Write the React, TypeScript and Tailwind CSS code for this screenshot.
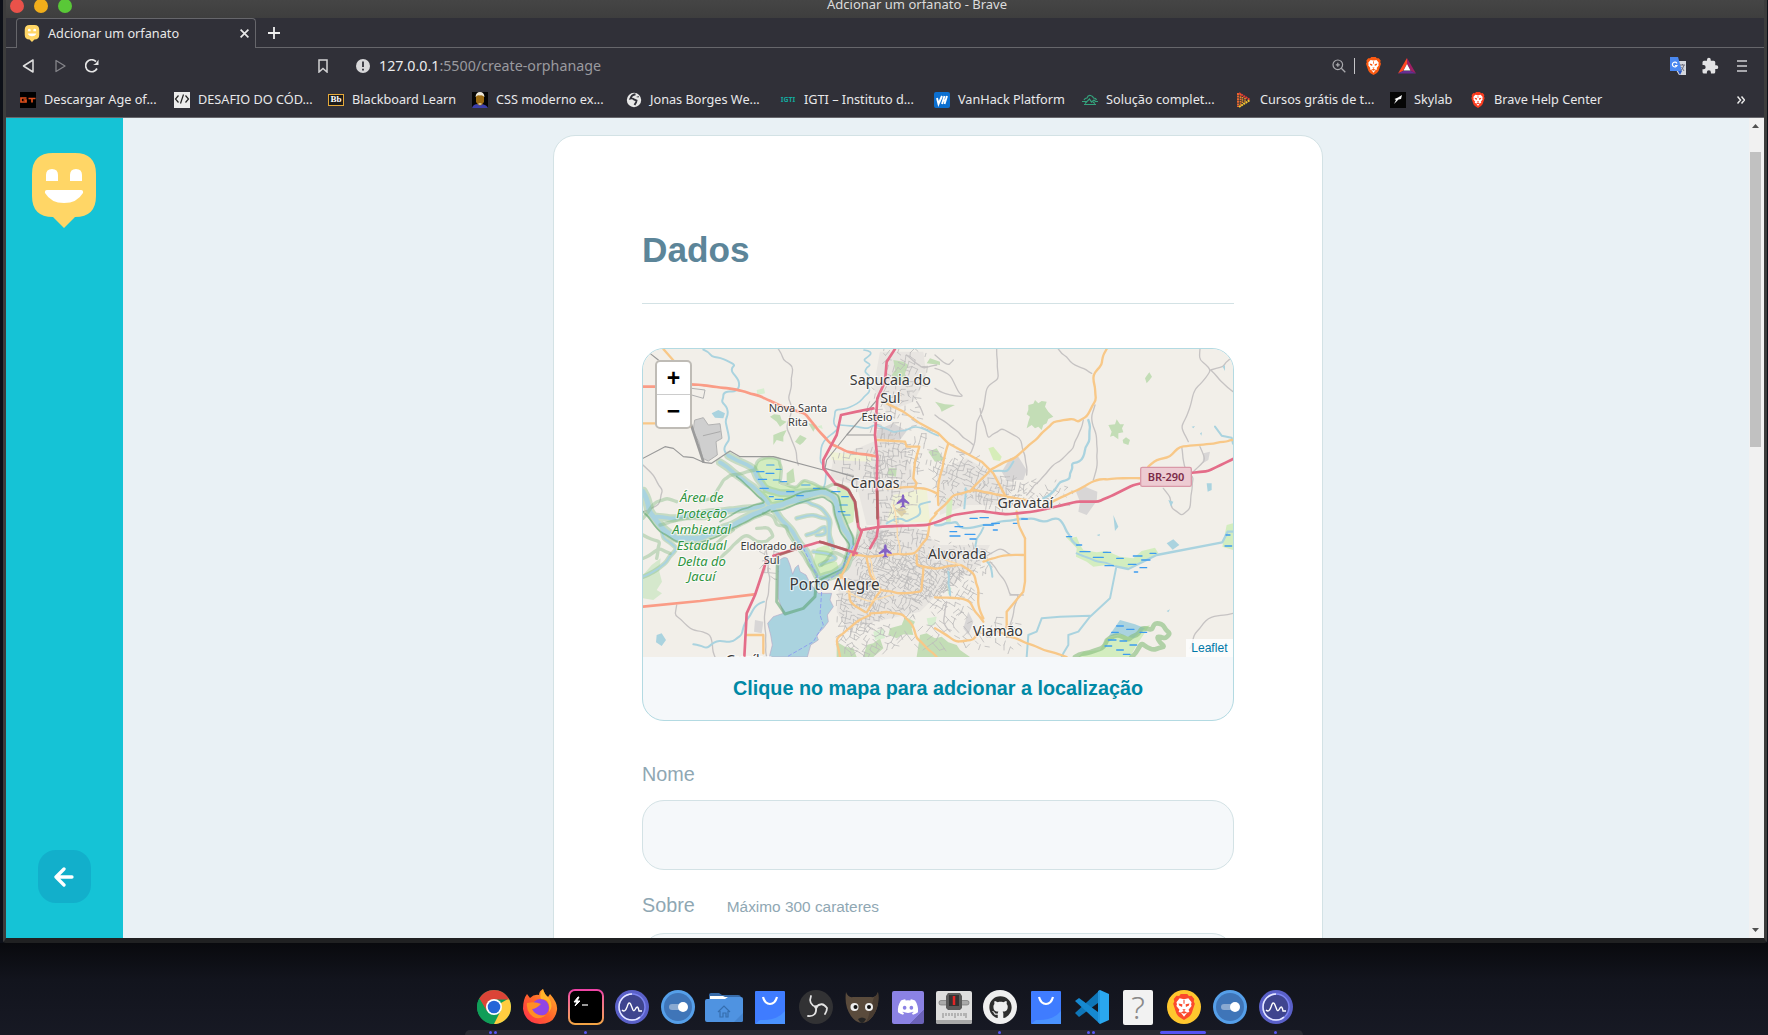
import React from "react";
import { FaDiscord, FaGithub } from "react-icons/fa";

const ui = "font-['Noto_Sans',sans-serif]";
const arial = "font-['Liberation_Sans',Arial,sans-serif]";

/* ---------- small brand icons ---------- */

function HappyLogo({ className }: { className: string }) {
  return (
    <svg viewBox="0 0 64 75" className={className}>
      <path d="M21 0H43Q64 0 64 21V43Q64 64 43 64L32 75L21 64Q0 64 0 43V21Q0 0 21 0Z" fill="#ffd666" />
      <path d="M14 28V22Q14 16 20 16Q26 16 26 22V28ZM38 28V22Q38 16 44 16Q50 16 50 22V28Z" fill="#fff" />
      <path d="M15 37H49Q51.500 37 51 40Q45 50 32 50Q19 50 13 40Q12.500 37 15 37Z" fill="#fff" />
    </svg>
  );
}

function BraveMark({ className, color }: { className: string; color: string }) {
  return (
    <svg viewBox="0 0 20 24" className={className}>
      <path d="M5.500 1.800L7 0H13L14.500 1.800L17 1.500L19.500 4.500L19 7L20 9L17 18Q16 20 14 21.500L10 24L6 21.500Q4 20 3 18L0 9L1 7L.500 4.500L3 1.500Z" fill={color} />
      <path d="M6 4L10 4.800L14 4L17 7.500L16.500 9.500L17 11L14.200 14.500L15 16.500L13 17L10 21L7 17L5 16.500L5.800 14.500L3 11L3.500 9.500L3 7.500Z" fill="#fff" />
      <path d="M5 8.800L8.500 9.500L8.200 12L5.500 10.500ZM15 8.800L11.500 9.500L11.800 12L14.500 10.500ZM8.500 14H11.500L10 16ZM7 17L10 15.800L13 17L10 18.200ZM9.500 5.500H10.500V9H9.500Z" fill={color} />
    </svg>
  );
}

const bookmarks: { label: string; width: string; icon: React.ReactNode }[] = [
  {
    label: "Descargar Age of...",
    width: "w-[154px]",
    icon: (
      <svg viewBox="0 0 16 16" className="size-4">
        <rect width="16" height="16" fill="#000" />
        <path d="M6.500 6H1V10H6V8H3.500M8.500 6.500H15.500M12 6.500V10.500" stroke="#e2501c" strokeWidth="1.700" fill="none" />
      </svg>
    ),
  },
  {
    label: "DESAFIO DO CÓD...",
    width: "w-[154px]",
    icon: (
      <svg viewBox="0 0 16 16" className="size-4">
        <rect width="16" height="16" fill="#ececec" />
        <path d="M4.500 3.500L1.500 7L4.500 10.500M11.500 3.500L14.500 7L11.500 10.500M9.500 2.500L6.500 11.500" stroke="#222" strokeWidth="1.200" fill="none" />
      </svg>
    ),
  },
  {
    label: "Blackboard Learn",
    width: "w-[144px]",
    icon: (
      <span className="flex h-3 w-4 items-center justify-center border border-[#e5a93a] bg-[#1b1b1b] font-['Liberation_Serif',serif] text-[9px] leading-none font-bold text-white">
        Bb
      </span>
    ),
  },
  {
    label: "CSS moderno ex...",
    width: "w-[154px]",
    icon: (
      <svg viewBox="0 0 16 16" className="size-4">
        <rect width="16" height="16" fill="#050505" />
        <path d="M0 16Q1 12 6 12L10 12Q15 13 16 16Z" fill="#3c3fa8" />
        <path d="M4 4Q8 -1 12 4V10Q8 17 4 10Z" fill="#9a6a12" />
        <path d="M3.500 5Q4 0 8 0Q12 0 12.500 5Q10 2.500 8 3.500Q5.500 2.500 3.500 5Z" fill="#efe9da" />
        <path d="M6.500 11H9.500V12.500Q8 13.500 6.500 12.500Z" fill="#c9b890" />
      </svg>
    ),
  },
  {
    label: "Jonas Borges We...",
    width: "w-[154px]",
    icon: (
      <svg viewBox="0 0 16 16" className="size-4">
        <circle cx="8" cy="8" r="7.200" fill="#e8e8e8" />
        <path d="M9.500 2.200Q6 3 5.500 4.500L4.500 6.500Q7 6 8 7.500L10.500 8.500L10 10.500L8.500 13" fill="none" stroke="#303038" strokeWidth="1.900" />
        <path d="M10 5L12.500 5.500L13 4Z" fill="#303038" />
      </svg>
    ),
  },
  {
    label: "IGTI – Instituto d...",
    width: "w-[154px]",
    icon: <span className="flex h-4 w-4 items-center justify-center text-[7px] leading-none font-bold text-[#13a89e]">IGTI</span>,
  },
  {
    label: "VanHack Platform",
    width: "w-[148px]",
    icon: (
      <svg viewBox="0 0 16 16" className="size-4">
        <rect width="16" height="16" rx="2" fill="#0b6fd0" />
        <path d="M3 6L4.500 12L8 4M8 12L10.500 4M9 8.500H12M10.500 12L13 4" stroke="#fff" strokeWidth="1.900" fill="none" />
      </svg>
    ),
  },
  {
    label: "Solução complet...",
    width: "w-[154px]",
    icon: (
      <svg viewBox="0 0 16 16" className="size-4">
        <path d="M2 12.500H14M0 9.500H5L7.500 7L9.500 10L12 8L13.500 9.500H16M2 8Q3 6 5 6Q6 3 8.500 3.500Q11 4 11.500 6Q14 6 14.500 8M3 11.500L5 9.500M13 11.500L11 10" stroke="#34a27c" strokeWidth="1.200" fill="none" />
      </svg>
    ),
  },
  {
    label: "Cursos grátis de t...",
    width: "w-[154px]",
    icon: (
      <svg viewBox="0 0 16 16" className="size-4">
        <path d="M2 1V15" stroke="#e7672f" strokeWidth="2" strokeDasharray="2 .6" />
        <path d="M4.500 2V14" stroke="#ee7b2d" strokeWidth="1.800" strokeDasharray="1.6 .7" />
        <path d="M3 1L14 8" stroke="#e43c32" strokeWidth="2" strokeDasharray="2 .6" />
        <path d="M3 15L14 8" stroke="#f4c430" strokeWidth="2" strokeDasharray="2 .6" />
        <path d="M6.500 5V11M9 6V10" stroke="#f0932b" strokeWidth="1.600" strokeDasharray="1.5 .7" />
      </svg>
    ),
  },
  {
    label: "Skylab",
    width: "w-[80px]",
    icon: (
      <svg viewBox="0 0 16 16" className="size-4">
        <rect width="16" height="16" fill="#060606" />
        <path d="M4 12L6 8L4.500 7L8 5.500L12 3L11 7L8.500 7.500L6 10Z" fill="#fff" />
      </svg>
    ),
  },
  { label: "Brave Help Center", width: "w-[160px]", icon: <BraveMark className="h-4 w-4" color="#fb3b1e" /> },
];

/* ---------- browser chrome ---------- */

function TitleBar() {
  return (
    <div className="relative flex h-[18px] shrink-0 items-start bg-linear-to-b from-[#454545] to-[#3e3e3e]">
      <div className="ml-1 flex gap-[10px]">
        <span className="-mt-px size-[14px] rounded-full bg-[#e9524a]" />
        <span className="-mt-px size-[14px] rounded-full bg-[#f1ae1b]" />
        <span className="-mt-px size-[14px] rounded-full bg-[#59c837]" />
      </div>
      <span className="absolute -top-[5px] left-[821px] text-[13px] leading-[18px] whitespace-nowrap text-[#dcdcdc]">
        Adcionar um orfanato - Brave
      </span>
    </div>
  );
}

function TabStrip() {
  return (
    <div className="flex h-[30px] shrink-0">
      <div className="w-[10px] border-b border-[#66666b]" />
      <div className="flex w-[240px] items-center rounded-t-[4px] border border-b-0 border-[#66666b] pl-[7px] text-[#e8e8e8]">
        <HappyLogo className="h-[17px] w-4" />
        <span className="ml-2 text-[12.7px]">Adcionar um orfanato</span>
        <svg viewBox="0 0 8 8" className="ml-auto mr-[6px] size-[9px]">
          <path d="M.500 .500L7.500 7.500M7.500 .500L.500 7.500" stroke="#e8e8e8" strokeWidth="1.500" />
        </svg>
      </div>
      <div className="flex flex-1 items-center border-b border-[#66666b] pl-3">
        <svg viewBox="0 0 12 12" className="size-3">
          <path d="M6 0V12M0 6H12" stroke="#f0f0f0" strokeWidth="1.800" />
        </svg>
      </div>
    </div>
  );
}

function NavBar() {
  return (
    <div className="flex h-9 shrink-0 items-center pb-px">
      <svg viewBox="0 0 12 14" className="ml-4 h-[14px] w-3">
        <path d="M11 1V13L1.500 7Z" fill="none" stroke="#e0e0e0" strokeWidth="1.500" strokeLinejoin="round" />
      </svg>
      <svg viewBox="0 0 12 14" className="ml-[21px] h-[14px] w-3">
        <path d="M1 1.500V12.500L10 7Z" fill="none" stroke="#85858a" strokeWidth="1.300" strokeLinejoin="round" />
      </svg>
      <svg viewBox="0 0 14 14" className="ml-[18px] size-[14px]">
        <path d="M12 9.500A6 6 0 1 1 11 2.600" fill="none" stroke="#e6e6e6" strokeWidth="1.700" />
        <path d="M13.500 .500V6H8Q11 5 13.500 .500Z" fill="#e6e6e6" />
      </svg>
      <svg viewBox="0 0 10 14" className="ml-[219px] h-[14px] w-[10px]">
        <path d="M1 1H9V13L5 9.500L1 13Z" fill="none" stroke="#d2d2d4" strokeWidth="1.500" />
      </svg>
      <svg viewBox="0 0 14 14" className="ml-7 size-[14px]">
        <circle cx="7" cy="7" r="7" fill="#d8d8da" />
        <path d="M7 2.500V8M7 9.800V11.500" stroke="#303038" strokeWidth="1.800" />
      </svg>
      <span className="ml-[9px] text-[14.25px] text-[#ececee]">
        127.0.0.1<span className="text-[#9a9a9f]">:5500/create-orphanage</span>
      </span>
      <div className="ml-auto flex items-center">
        <svg viewBox="0 0 14 14" className="size-[14px]">
          <circle cx="5.800" cy="5.800" r="4.800" fill="none" stroke="#a9a9ad" strokeWidth="1.200" />
          <path d="M9.300 9.300L13.300 13.300M5.800 3.800V7.800M3.800 5.800H7.800" stroke="#a9a9ad" strokeWidth="1.300" />
        </svg>
        <span className="ml-2 h-4 w-px bg-[#c5c5c8]" />
        <BraveMark className="ml-[10px] h-[18px] w-[17px]" color="#fb5a12" />
        <svg viewBox="0 0 18 16" className="ml-4 h-4 w-[18px]">
          <path d="M9 0L0 15.500L5 13L9 6Z" fill="#ff4724" />
          <path d="M9 0L18 15.500L13 13L9 6Z" fill="#9e1f63" />
          <path d="M0 15.500H18L13 13H5Z" fill="#662d91" />
          <path d="M9 6L5.500 12.500H12.500Z" fill="#fff" />
        </svg>
      </div>
      <div className="ml-[254px] mr-[17px] flex items-center">
        <svg viewBox="0 0 16 18" className="h-[18px] w-4">
          <path d="M6 4H16V18H9L6 13Z" fill="#d4d7dc" />
          <path d="M0 0H8L12 14H0Z" fill="#4a88f0" />
          <path d="M8 14H12L10 18Z" fill="#2a56c6" />
          <path d="M7 6.500A2.400 2.400 0 1 0 7 8.500H5" fill="none" stroke="#fff" strokeWidth="1.200" />
          <path d="M10 8H15M12.500 7V8M14 8Q13 12 10.500 14M11.500 10L14 14" fill="none" stroke="#667" strokeWidth=".9" />
        </svg>
        <svg viewBox="0 0 24 24" className="ml-[15px] size-[18px]">
          <path d="M20.500 11H19V7a2 2 0 0 0-2-2h-4V3.500a2.500 2.500 0 0 0-5 0V5H4a2 2 0 0 0-2 2v3.800h1.500a2.700 2.700 0 0 1 0 5.400H2V20a2 2 0 0 0 2 2h3.800v-1.500a2.700 2.700 0 0 1 5.400 0V22H17a2 2 0 0 0 2-2v-4h1.500a2.500 2.500 0 0 0 0-5Z" fill="#e2e2e4" />
        </svg>
        <svg viewBox="0 0 10 14" className="ml-[18px] h-[14px] w-[10px]">
          <path d="M0 2H10M0 7H10M0 12H10" stroke="#d0d0d3" strokeWidth="1.700" />
        </svg>
      </div>
    </div>
  );
}

function BookmarksBar() {
  return (
    <div className="flex h-[34px] shrink-0 items-center border-b border-[#67676c] pb-px pl-[14px]">
      {bookmarks.map((b) => (
        <div key={b.label} className={`flex shrink-0 items-center gap-2 ${b.width}`}>
          {b.icon}
          <span className="text-[12.7px] whitespace-nowrap text-[#e8e8ea]">{b.label}</span>
        </div>
      ))}
      <svg viewBox="0 0 8 8" className="ml-auto mr-[19px] size-2">
        <path d="M.500 .500L3.500 4L.500 7.500M4.500 .500L7.500 4L4.500 7.500" fill="none" stroke="#ececec" strokeWidth="1.500" />
      </svg>
    </div>
  );
}

/* ---------- map ---------- */

type District = { x: number; y: number; rx: number; ry: number; step: number; tilt: number; density: number };

const districts: District[] = [
  { x: 790, y: 60, rx: 75, ry: 90, step: 14, tilt: 0.3, density: 0.35 },
  { x: 750, y: 200, rx: 90, ry: 80, step: 14, tilt: 0.2, density: 0.35 },
  { x: 660, y: 360, rx: 95, ry: 60, step: 16, tilt: 0.1, density: 0.45 },
  { x: 755, y: 400, rx: 80, ry: 140, step: 13, tilt: 0.05, density: 0.5 },
  { x: 850, y: 310, rx: 80, ry: 60, step: 15, tilt: 0.2, density: 0.3 },
  { x: 960, y: 400, rx: 90, ry: 75, step: 12, tilt: 0.4, density: 0.5 },
  { x: 1075, y: 440, rx: 95, ry: 50, step: 12, tilt: 0.2, density: 0.5 },
  { x: 1200, y: 445, rx: 100, ry: 45, step: 13, tilt: 0.7, density: 0.3 },
  { x: 700, y: 610, rx: 60, ry: 65, step: 12, tilt: 0.5, density: 0.6 },
  { x: 650, y: 780, rx: 65, ry: 95, step: 12, tilt: 0.2, density: 0.6 },
  { x: 755, y: 720, rx: 125, ry: 90, step: 12, tilt: 0.5, density: 0.6 },
  { x: 790, y: 590, rx: 95, ry: 55, step: 13, tilt: 0.1, density: 0.5 },
  { x: 850, y: 690, rx: 110, ry: 70, step: 12, tilt: 0.7, density: 0.5 },
  { x: 960, y: 640, rx: 100, ry: 50, step: 12, tilt: 0.1, density: 0.55 },
  { x: 930, y: 730, rx: 80, ry: 80, step: 13, tilt: 0.6, density: 0.4 },
  { x: 690, y: 880, rx: 90, ry: 55, step: 14, tilt: 0.6, density: 0.45 },
  { x: 910, y: 860, rx: 140, ry: 60, step: 17, tilt: 0.8, density: 0.28 },
  { x: 1075, y: 865, rx: 75, ry: 50, step: 15, tilt: 0.3, density: 0.3 },
  { x: 390, y: 640, rx: 32, ry: 60, step: 11, tilt: 0.2, density: 0.4 },
];

function randomizer(start: number) {
  let seed = start;
  return () => {
    seed = (seed * 16807) % 2147483647;
    return seed / 2147483647;
  };
}

// Repeatable pseudo-random street grids, one per urban district.
function streets(): string {
  const rand = randomizer(71);
  let d = "";
  for (const p of districts) {
    const n = Math.ceil(Math.max(p.rx, p.ry) / p.step);
    const c = Math.cos(p.tilt);
    const s = Math.sin(p.tilt);
    const grid: { x: number; y: number; inside: boolean }[][] = [];
    for (let i = -n; i <= n; i++) {
      const row: { x: number; y: number; inside: boolean }[] = [];
      for (let j = -n; j <= n; j++) {
        const u = i * p.step + (rand() - 0.5) * 9;
        const v = j * p.step + (rand() - 0.5) * 9;
        const dx = u * c - v * s;
        const dy = u * s + v * c;
        const r = (dx * dx) / (p.rx * p.rx) + (dy * dy) / (p.ry * p.ry);
        row.push({ x: p.x + dx, y: p.y + dy, inside: r < 0.6 + rand() * 0.7 });
      }
      grid.push(row);
    }
    for (let i = 0; i < 2 * n; i++) {
      for (let j = 0; j < 2 * n; j++) {
        const a = grid[i][j];
        if (!a.inside) continue;
        const r = grid[i + 1][j];
        const b = grid[i][j + 1];
        if (rand() < p.density) d += `M${a.x.toFixed(0)} ${a.y.toFixed(0)}L${r.x.toFixed(0)} ${r.y.toFixed(0)}`;
        if (rand() < p.density) d += `M${a.x.toFixed(0)} ${a.y.toFixed(0)}L${b.x.toFixed(0)} ${b.y.toFixed(0)}`;
      }
    }
  }
  return d;
}

// Turns "x y x y ..." point lists (separated by "/") into rounded, slightly meandering curves.
function curve(lists: string, amp: number): string {
  const rand = randomizer(1234);
  return lists
    .split("/")
    .map((list) => {
      const n = list.trim().split(/\s+/).map(Number);
      const pts: number[][] = [];
      for (let i = 0; i + 3 < n.length; i += 2) {
        const dx = n[i + 2] - n[i];
        const dy = n[i + 3] - n[i + 1];
        const len = Math.hypot(dx, dy) || 1;
        const parts = Math.max(2, Math.round(len / 18));
        for (let k = 0; k < parts; k++) {
          const off = k === 0 ? 0 : (rand() - 0.5) * 2 * amp;
          pts.push([n[i] + (dx * k) / parts - (dy / len) * off, n[i + 1] + (dy * k) / parts + (dx / len) * off]);
        }
      }
      pts.push([n[n.length - 2], n[n.length - 1]]);
      let d = `M${pts[0][0].toFixed(1)} ${pts[0][1].toFixed(1)}`;
      for (let i = 1; i < pts.length - 1; i++) {
        const mx = (pts[i][0] + pts[i + 1][0]) / 2;
        const my = (pts[i][1] + pts[i + 1][1]) / 2;
        d += `Q${pts[i][0].toFixed(1)} ${pts[i][1].toFixed(1)} ${mx.toFixed(1)} ${my.toFixed(1)}`;
      }
      const e = pts[pts.length - 1];
      return `${d}L${e[0]} ${e[1]}`;
    })
    .join("");
}

const streetPath = streets();

const mainRiver = curve(
  "9 440 22 470 28 500 55 535 85 565 110 580 170 582 220 565 290 535 340 508 385 490 430 478 490 455 540 440 570 448 588 470 592 500 605 540 625 570 637 600 625 640 615 665 580 690 545 700",
  2,
);
const sideRivers = curve(
  "240 352 290 390 340 425 385 475/265 332 300 350 340 370 352 400 375 430 420 445 490 442 540 440/400 490 420 520 450 550 475 590 500 620 515 660 530 690 548 720/50 515 110 520 160 510 220 500 280 495 340 490 370 480",
  2,
);
const creeks = curve(
  "420 480 500 468 545 490 572 530 568 570 580 610/470 520 510 510 565 520 570 600/500 570 530 560 555 545 558 565 530 570/520 620 560 625 590 640 540 660/60 540 70 580 110 610 80 650 40 680 9 695",
  3,
);

const labels: { t: string; x: number; y: number; s: number; green?: boolean }[] = [
  { t: "Sapucaia do", x: 751, y: 119, s: 42.8 },
  { t: "Sul", x: 751, y: 174, s: 42.8 },
  { t: "Nova Santa", x: 474, y: 202, s: 33 },
  { t: "Rita", x: 474, y: 243, s: 33 },
  { t: "Esteio", x: 711, y: 227, s: 33 },
  { t: "Canoas", x: 705, y: 428, s: 42.5 },
  { t: "Eldorado do", x: 395, y: 616, s: 33 },
  { t: "Sul", x: 395, y: 657, s: 33 },
  { t: "Porto Alegre", x: 584, y: 736, s: 46 },
  { t: "Guaíba", x: 327, y: 959, s: 42 },
  { t: "Gravataí", x: 1156, y: 490, s: 42.5 },
  { t: "Alvorada", x: 952, y: 641, s: 42.5 },
  { t: "Viamão", x: 1074, y: 873, s: 42.5 },
  { t: "Área de", x: 185, y: 472, s: 39, green: true },
  { t: "Proteção", x: 185, y: 520, s: 39, green: true },
  { t: "Ambiental", x: 185, y: 567, s: 39, green: true },
  { t: "Estadual", x: 185, y: 614, s: 39, green: true },
  { t: "Delta do", x: 185, y: 662, s: 39, green: true },
  { t: "Jacuí", x: 185, y: 709, s: 39, green: true },
];

const plane = "M0 -20Q4 -20 4 -8L19 5V10L4 4L3 13L8 18V20L0 18L-8 20V18L-3 13L-4 4L-19 10V5L-4 -8Q-4 -20 0 -20Z";

function RegionMap() {
  return (
    <svg viewBox="9 12 1770 924" className="block h-[308px] w-[590px] bg-[#f2efe9]" strokeLinejoin="round" strokeLinecap="round">
      {/* built-up land and parks */}
      <g fill="#e8e5e1">
        <path d="M720 20L850 20L860 100L820 170L740 200L700 130Z" />
        <path d="M700 290L790 290L830 420L790 540L680 540L650 420L570 400L580 340Z" />
        <path d="M890 380L980 340L1120 420L1090 480L980 480L900 510Z" />
        <path d="M650 560L820 540L900 600L1050 600L1020 660L900 740L840 800L620 850L590 800L600 700Z" />
      </g>
      <path d="M165 225L190 218L205 240L240 236L246 280L228 290L232 330L205 348L188 340L176 290L160 260Z" fill="#cfcfcf" stroke="#b2b2b2" strokeWidth="3" />
      <path d="M190 272L240 260" stroke="#aaa" strokeWidth="3" />
      <g fill="#d8d6d6">
        <path d="M1135 335L1160 375L1150 405L1100 405L1085 380L1110 340Z" />
        <path d="M1308 440L1335 425L1372 440L1370 468L1340 510L1315 500L1320 470Z" />
        <path d="M712 255L760 235L800 258L780 285L710 280Z" />
        <path d="M1690 325L1710 320L1705 345L1688 355ZM985 800L1000 830L985 870L970 850ZM345 825L370 830L365 865L342 860Z" />
        <path d="M680 560L730 555L725 600L690 610ZM890 610L930 620L920 640L890 630Z" />
      </g>
      <path d="M570 320L700 335L695 350L575 345ZM760 450L860 430L870 530L740 535Z" fill="#f0f2d6" />
      <path d="M765 495L785 485L800 500L785 515Z" fill="#ddd0a8" />
      <g fill="#c3ddb6">
        <path d="M760 45L790 50L805 60L795 85L800 110L780 108L770 120L755 90L765 75Z" />
        <path d="M440 385L460 370L465 410L440 420ZM390 215L402 208L420 210L425 225L440 230L420 245L410 230ZM400 270L420 262L440 255L430 275L430 290L410 285L400 300ZM480 270L500 280L490 292L480 300L465 290ZM505 235L530 240L520 260Z" />
        <path d="M745 370L770 370L768 395L742 390ZM865 320L890 310L912 345L885 350ZM870 40L900 50L900 60L860 55Z" />
        <path d="M1165 180L1180 176L1185 165L1195 175L1205 168L1220 170L1215 185L1225 200L1240 215L1225 222L1220 235L1210 240L1205 255L1195 245L1185 250L1175 240L1160 250L1165 230L1170 215L1160 208L1165 195Z" />
        <path d="M1405 240L1425 238L1430 223L1440 238L1452 238L1446 250L1450 262L1435 265L1435 283L1420 272L1410 275L1415 260ZM1448 285L1458 277L1470 285L1465 300L1450 295ZM1515 100L1520 92L1528 82L1536 95L1528 106L1520 115Z" />
        <path d="M750 850L785 840L795 815L825 830L815 850L820 870L790 868L770 880L745 870ZM680 900L700 895L720 880L730 910L700 936L670 936Z" />
        <path d="M840 870L860 865L885 880L905 875L925 892L950 900L960 915L990 936L830 936ZM590 890L615 905L640 910L650 936L590 936Z" />
        <path d="M885 170L915 178L945 180L925 190L905 200L900 188ZM885 320L905 330L890 350Z" />
      </g>
      <g fill="#d7eed0">
        <path d="M350 135L372 130L375 145L352 150ZM700 860L730 850L735 880L705 885ZM860 820L890 815L885 840L865 842ZM920 720L935 730L925 750ZM530 245L545 240L548 252Z" />
      </g>
      <path d="M9 690L35 660L62 640L58 680L66 710L50 735L66 745L40 765L9 760Z" fill="#d5e8cc" />
      <path d="M1045 310L1060 305L1085 335L1080 348L1060 345Z" fill="#d6edb9" />

      {/* minor streets */}
      <path d={streetPath} fill="none" stroke="#bdbbbb" strokeWidth="2.400" />
      <g fill="none" stroke="#c6c3c3" strokeWidth="4">
        <path
          d={curve(
            "415 12 430 45 458 65 455 120 445 160 455 190 440 250 470 325 475 360/9 360 40 390 68 435 55 480 9 500/110 780 105 810 150 850 210 870 225 936/375 600 390 700 375 800 380 936/1070 12 1075 100 1040 130 1030 190 1010 230 1005 290 990 330 950 320/1020 190 1045 280 1085 250 1140 280 1155 330 1160 390/1255 12 1290 50 1340 75 1355 85",
            3,
          )}
        />
        <path
          d={curve(
            "1330 225 1300 310 1230 370 1160 450/1365 180 1355 225 1370 280 1370 370 1360 405/1680 12 1680 45 1712 75 1660 145 1645 200 1625 245 1645 290/1712 75 1750 65 1779 30/1712 75 1779 140/1625 305 1635 370 1660 395 1650 490 1625 512 1595 490 1590 455 1570 430/1680 305 1695 345 1660 380/1779 805 1705 820 1665 865 1650 910",
            3,
          )}
        />
        <path
          d={curve(
            "885 70 930 90 950 130 970 155 930 150 885 130/885 210 940 250 1000 300/885 30 925 60 940 45/1030 640 1080 610 1110 630 1150 630/1050 650 1090 700 1110 750 1135 750 1110 840/1110 750 1150 750/800 30 850 70 890 60/830 170 850 210/920 770 910 830 930 860",
            3,
          )}
        />
      </g>

      {/* wetlands */}
      <g fill="#d3edbf">
        <path d="M340 375Q350 340 385 337Q425 338 424 365L418 420L470 425L490 405L560 430L490 470L430 478L380 475L350 440L290 395L370 440Q360 400 340 375Z" />
        <path d="M590 425L620 430L645 480L640 530L620 540L600 480Z" />
        <path d="M1275 573L1295 578L1310 575L1320 600L1330 615L1370 622L1400 618L1440 635L1480 640L1505 618L1545 608L1555 625L1510 650L1460 670L1400 660L1360 665L1340 650L1308 635L1310 610Z" />
        <path d="M1760 540L1779 535V615L1747 605Z" />
        <path d="M1315 936L1330 920L1380 915L1400 880L1440 870L1500 850L1530 840L1490 900L1470 936Z" />
        <path d="M920 460L938 465L932 530L918 530ZM530 610L560 600L580 620L560 650L590 650L600 680L540 700L520 650Z" />
      </g>
      <g fill="none" stroke="#7fbb86" opacity=".38">
        <path d={mainRiver} strokeWidth="30" />
        <path d={sideRivers} strokeWidth="24" />
        <path d={creeks} strokeWidth="14" />
      </g>

      {/* water */}
      <path
        d="M415 650Q430 632 442 640L450 660L458 688L466 668L475 660L480 680L498 690L510 715L535 745L575 745L570 765L580 785L562 810L565 830L550 850L530 870L535 885L512 900L502 936H388L397 900L392 870L383 835L400 815L430 805L415 760Z"
        fill="#aad3df"
        stroke="#b5a9c8"
        strokeWidth="2"
      />
      <g fill="none" stroke="#aad3df">
        <path d={mainRiver} strokeWidth="15" />
        <path d={sideRivers} strokeWidth="11" />
        <path d={creeks} strokeWidth="6" />
        <path
          d={curve("190 14 215 35 250 42 285 60 275 80 295 105 295 132 250 145 245 170 262 190 260 245 268 285 252 310 268 335", 5)}
          strokeWidth="6"
        />
        <path
          d={curve(
            "672 15 695 25 670 45 692 60 674 80 690 95 675 115 690 140 660 170 620 190 585 195 580 230 595 250 550 290 540 350 560 380 550 430/600 240 680 250 700 240 760 262 830 245 895 272",
            4,
          )}
          strokeWidth="5"
        />
        <path d={curve("160 898 200 910 230 888 280 888 305 870 320 825 350 780 372 770", 3)} strokeWidth="6" />
        <path
          d={curve(
            "1345 225 1348 290 1325 345 1295 355 1290 400 1260 410 1240 440 1210 460/885 540 950 530 970 550 1010 545 1050 540 1100 528 1180 520 1220 530 1255 520 1280 560 1310 600",
            5,
          )}
          strokeWidth="7"
        />
        <path d={curve("1030 548 1010 580 1005 605 1050 660 1057 695/1060 378 1100 380 1120 350/977 430 973 490/925 680 930 750/1310 625 1350 640 1430 665", 3)} strokeWidth="6" />
        <path d="M1785 560L1763 560L1747 592L1550 630L1465 672L1430 665" strokeWidth="7" />
        <path d="M1428 670L1410 760L1350 815L1315 860L1285 870L1285 900L1270 925L1265 936M1350 812L1260 815L1205 820L1190 860L1165 870L1160 936M1725 245L1745 272L1775 278L1779 296" strokeWidth="6" />
        <path d={curve("740 535 780 520 800 530 840 510 835 480 870 470", 4)} strokeWidth="6" />
      </g>
      <path
        d="M50 870L65 865L78 885L65 903L48 892ZM215 205L235 195L255 205L250 220L225 218ZM1580 595L1600 583L1618 600L1598 614ZM1420 510L1435 545L1425 558ZM1700 415L1715 415L1715 435L1703 440ZM1748 65L1755 60L1755 78ZM1655 245L1665 243L1660 250ZM1585 465L1600 470L1593 485ZM1680 265L1686 262L1684 272ZM1370 570L1380 567L1378 574ZM1580 798L1590 793L1585 802Z"
        fill="#aad3df"
      />
      <path d="M1440 825L1485 838L1515 850L1480 880L1440 868L1405 875Z" fill="#aad3df" />
      <path
        d={curve("1305 936 1350 922 1385 910 1400 885 1430 870 1465 885 1490 870 1505 850 1535 855 1545 835 1570 840 1590 865 1575 880 1550 875 1575 905 1540 915 1505 895 1495 910 1475 936", 4)}
        fill="none"
        stroke="#85bd7c"
        strokeWidth="14"
        opacity=".6"
      />
      <path d="M350 380H372M380 360H402M378 385H402M408 373H424M355 403H380M400 405H420M360 430H385M388 455H400M405 463H428M440 440H462M470 452H490M485 420H510M520 430H540M575 440H600M605 455H625M600 480H622M610 510H630M595 500H615M420 410H440" stroke="#3d9cf0" strokeWidth="3.500" />
      <path d="M930 560H950M930 573H960M945 545H968M990 520H1012M1020 518H1045M975 568H1005M990 582H1008M1030 540H1060M1055 535H1078M1060 555H1072M1120 535H1135M1145 522H1162M1280 575H1295M1310 600H1325M1320 620H1350M1360 637H1390M1390 622H1412M1395 662H1420M1430 640H1450M1465 658H1488M1480 633H1506M1505 645H1530M1483 681H1493M1530 625H1548M1500 668H1520" stroke="#3d9cf0" strokeWidth="4" />
      <path d="M1430 843H1450M1460 853H1482M1415 862H1435M1405 885H1428M1440 888H1460M1395 903H1415M1430 915H1450M1470 900H1490M1450 928H1470M1500 862H1520M1758 570H1770M1755 603H1775" stroke="#3d9cf0" strokeWidth="4" />

      {/* protected-area outlines */}
      <g fill="none" stroke="#85ba86" strokeWidth="10" opacity=".42">
        <path
          d={curve(
            "345 375 355 345 385 337 418 342 425 370 418 415 470 428 492 405 555 430 585 415 625 430 645 470 655 540 650 600 610 680 540 700/345 375 310 385 270 390 250 405 235 430 220 460 180 470/9 520 50 470 80 460 110 470/9 570 60 590 50 640/60 540 120 520 200 520",
            3,
          )}
        />
        <path
          d={curve(
            "370 505 400 515 410 540 440 545 450 575 480 620 500 650 530 690/350 550 385 548 400 575 380 590 350 590 320 570 280 600 240 640/90 625 60 610 10 640/280 555 220 600 150 610/545 660 580 620 620 640",
            3,
          )}
        />
      </g>
      <g fill="none" stroke="#4f9d63" strokeWidth="5" opacity=".5">
        <path
          d={curve(
            "290 395 340 440 375 472 340 480 290 500 240 530/390 495 360 510 290 545 220 580 170 595 110 590 60 560 25 515 9 500/395 500 440 490 490 470 550 455 580 475 585 510 600 560 630 600 610 670 540 705/430 465 490 440 555 430 595 450 605 500 640 580 640 600",
            2,
          )}
        />
        <path d="M412 640L410 770L435 807L490 790L525 755L530 700" strokeWidth="9" />
      </g>
      <path d="M490 610L530 690L545 740L540 810L550 840L520 890L440 936M545 720L600 680L640 600" fill="none" stroke="#8ea0ef" strokeWidth="3" strokeDasharray="10 8" />

      {/* railways */}
      <path d="M150 230L190 350" fill="none" stroke="#9b9b9b" strokeWidth="8" />
      <path d="M9 340L75 305L100 310L130 335L160 338L190 352L215 355L270 318L300 335L400 335L550 375M30 25L55 45M715 160L620 270L560 345L555 370L640 395M620 270H705" fill="none" stroke="#999" strokeWidth="3.500" />
      <path d="M155 130L195 135L190 160L155 150" fill="none" stroke="#b0b0b0" strokeWidth="3" />

      {/* secondary roads */}
      <g fill="none" stroke="#f8c888" strokeWidth="7">
        <path d="M70 12L105 52M9 235H45M150 210V245M740 175L790 200L840 235L895 265L925 295L1025 350L1060 385L1100 460" />
        <path d="M712 285L795 290L800 305L838 305L825 350L820 400L830 415L825 425L740 430" />
        <path d={curve("890 505 870 525 862 580 825 625 760 628 680 635 645 630/885 505 915 480 940 450 1000 435 1100 455 1160 465/895 480 895 420 910 350 925 295", 2)} />
        <path d={curve("990 440 1050 375 1130 335 1180 290 1240 230 1300 222 1315 230 1340 215 1368 165 1360 90 1385 60 1390 30 1400 12", 2)} />
        <path d={curve("1230 475 1300 440 1370 405 1440 400 1500 400 1600 382/1525 365 1550 345 1590 335 1620 305 1680 300 1760 290 1779 285/1130 500 1135 540 1155 580", 2)} />
        <path d="M1155 580L1155 710L1150 740L1100 800L1100 850" />
        <path
          d={curve(
            "825 430 860 432 890 445/830 630 830 660 890 672 960 658 1000 685 1015 730 1015 780 1030 820/885 757 960 760 990 770 1005 800 1030 830/1075 860 1160 895 1230 920 1280 936/850 670 845 740 790 745 720 735 690 690 680 640",
            2,
          )}
        />
        <path
          d={curve(
            "600 690 625 720 630 770 680 805 700 770 720 740/690 810 650 830 590 880 600 936/690 805 740 800 790 810 820 845 830 880 890 936/665 560 640 620 600 700/885 850 920 870 950 890 1000 885 1020 860/1150 630 1100 630 1030 650",
            2,
          )}
        />
        <path d="M318 870H370V925" />
      </g>
      <g fill="none" stroke="#fbdcae" strokeWidth="4">
        <path d={curve("760 480 770 540 780 625/690 640 700 690 720 740/870 630 910 640 960 660/620 740 690 770 760 750", 3)} />
      </g>

      {/* primary roads and motorways */}
      <path d={`${curve("150 118 200 122 280 132 350 150 430 185 495 205 530 250 570 295 620 320 712 335", 1)}M9 125H50M9 785L180 768L343 748`} fill="none" stroke="#fa9c86" strokeWidth="8" />
      <g fill="none" stroke="#e46d89" strokeWidth="8">
        <path d="M765 12L740 50L735 110L712 160L705 270L712 340L710 420L715 540L710 575L690 610M700 190L650 200L603 210L590 270L550 345V370L585 415L625 435L645 470L655 545L665 560L640 630" />
        <path d={curve("665 555 720 545 860 540 895 530 940 510 1020 498 1100 508 1180 500 1270 480 1310 470 1375 470 1420 450 1480 420 1560 403 1640 385 1705 378 1779 342", 0)} />
        <path d="M380 645L345 750L320 805L313 936" />
        <path d={curve("400 632 490 605 540 590 650 625", 0)} />
      </g>
      <path d="M585 418Q610 420 625 435L645 470L652 530M712 440L712 520M410 632L480 608M540 590L620 615" fill="none" stroke="#a65a58" strokeWidth="8" opacity=".75" />

      <g fill="#8461c4">
        <path d={plane} transform="translate(789 468)" />
        <path d={plane} transform="translate(736 618)" />
      </g>
      <rect x="1502" y="367" width="152" height="57" rx="5" fill="#edcbd2" stroke="#d999a8" strokeWidth="4" />

      <g fontFamily="'Noto Sans', sans-serif" textAnchor="middle" paintOrder="stroke" stroke="#ffffff" strokeOpacity=".65" strokeWidth="7">
        {labels.map((l) => (
          <text key={`${l.t}${l.x}${l.y}`} x={l.x} y={l.y} fontSize={l.s} fill={l.green ? "#2f9440" : "#3a3a3a"} fontStyle={l.green ? "italic" : "normal"}>
            {l.t}
          </text>
        ))}
      </g>
      <text x="1578" y="407" fontFamily="'Noto Sans', sans-serif" fontWeight="600" fontSize="33" fill="#7c2b49" textAnchor="middle">
        BR-290
      </text>
    </svg>
  );
}

/* ---------- page ---------- */

function MapField() {
  return (
    <div className="mt-[44px] h-[373px] overflow-hidden rounded-[22px] border border-[#b3dae2] bg-[#f5f8fa]">
      <div className="relative">
        <RegionMap />
        <div className="absolute top-[11px] left-3 w-[37px] overflow-hidden rounded-[5px] border-2 border-[#bfbcb6] bg-white text-center text-[23px] font-bold text-black">
          <div className="flex h-[33px] items-center justify-center border-b border-[#ccc]">+</div>
          <div className="flex h-8 items-center justify-center">−</div>
        </div>
        <div className="absolute right-0 bottom-0 flex h-[18px] items-center bg-white/80 px-[5.5px] text-[12.1px] text-[#0078a8]">Leaflet</div>
      </div>
      <div className="flex h-[63px] items-center justify-center pt-px text-[19.8px] font-bold text-[#0089a5]">
        Clique no mapa para adcionar a localização
      </div>
    </div>
  );
}

function Page() {
  return (
    <div className={`flex h-[820px] shrink-0 overflow-hidden bg-[#e9f1f5] ${arial}`}>
      <aside className="flex w-[117px] shrink-0 flex-col items-center justify-between bg-[#15c3d6] pt-[35px] pr-[2px] pb-[35px]">
        <HappyLogo className="h-[75px] w-16" />
        <button className="ml-px flex size-[53px] items-center justify-center rounded-[18px] bg-[#12afcb] pr-px">
          <svg viewBox="0 0 20 20" className="size-5">
            <path d="M18 10H2M10 2L2 10L10 18" fill="none" stroke="#fff" strokeWidth="3.300" strokeLinecap="round" strokeLinejoin="round" />
          </svg>
        </button>
      </aside>
      <main className="flex-1 pt-[17px] pl-[430px]">
        <form className="h-[900px] w-[770px] rounded-t-[22px] border border-[#d3e2e5] bg-white px-[88px] pt-[88px]">
          <h1 className="flex h-[80px] items-start border-b border-[#d3e2e5] pt-[6px] text-[35.2px] leading-[40px] font-bold text-[#5c8599]">Dados</h1>
          <MapField />
          <label className="mt-10 block h-[27px] text-[19.8px] leading-[26px] text-[#8fa7b3]">Nome</label>
          <div className="mt-3 h-[70px] rounded-[22px] border border-[#d3e2e5] bg-[#f5f8fa]" />
          <label className="mt-[22px] flex h-[27px] items-baseline text-[19.8px] leading-[26px] text-[#8fa7b3]">
            Sobre<span className="ml-8 text-[15.4px]">Máximo 300 carateres</span>
          </label>
          <div className="mt-[14px] h-[132px] rounded-[22px] border border-[#d3e2e5] bg-[#f5f8fa]" />
        </form>
      </main>
      <div className="flex w-[15px] flex-col items-center justify-between bg-[#f1f1f1] pt-[6px] pr-[2px] pb-[6px]">
        <svg viewBox="0 0 7 4" className="h-1 w-[7px]">
          <path d="M0 4L3.500 0L7 4Z" fill="#505050" />
        </svg>
        <div className="mt-6 mb-auto h-[295px] w-[11px] bg-[#c1c1c1]" />
        <svg viewBox="0 0 7 4" className="h-1 w-[7px]">
          <path d="M0 0L3.500 4L7 0Z" fill="#505050" />
        </svg>
      </div>
    </div>
  );
}

/* ---------- dock ---------- */

const svg36 = "size-9 overflow-visible";

function Chrome() {
  return (
    <svg viewBox="0 0 36 36" className={svg36}>
      <circle cx="18" cy="18" r="17" fill="#109d58" />
      <path d="M18 18L32.700 9.500A17 17 0 0 1 18 35Z" fill="#ffcd40" />
      <path d="M18 18L3.300 9.500A17 17 0 0 1 32.700 9.500L33 10.500H18Z" fill="#db4437" />
      <path d="M3.300 9.500L11 23L18 18L18 10Z" fill="#db4437" />
      <path d="M3.300 9.500L11.200 22.500L24.500 22L18 35A17 17 0 0 1 3.300 9.500Z" fill="#109d58" />
      <circle cx="18" cy="18" r="8" fill="#fff" />
      <circle cx="18" cy="18" r="6.300" fill="#2466d8" />
    </svg>
  );
}

function Firefox() {
  return (
    <svg viewBox="0 0 36 36" className={svg36}>
      <defs>
        <linearGradient id="fox" x1="1" y1="0" x2="0" y2="1">
          <stop offset="0" stopColor="#ffb82a" />
          <stop offset=".5" stopColor="#ff642b" />
          <stop offset="1" stopColor="#ff2b4e" />
        </linearGradient>
      </defs>
      <path d="M5 5L8 9Q12 5 17 6Q17 2 21 0Q22 5 26 8L28 5Q36 14 35 21Q33 35 18 35Q3 34 1 20Q1 10 5 5Z" fill="url(#fox)" />
      <circle cx="18.500" cy="18.500" r="8.500" fill="#9145e6" />
      <path d="M5 14Q13 12 19 15Q14 20 10 20Q14 28 24 26Q15 33 8 25Q4 20 5 14Z" fill="#ff8e23" />
      <path d="M21 0Q17 5 19 10Q29 10 27 23Q32 17 27 9Q22 5 21 0Z" fill="#ffb32a" />
    </svg>
  );
}

function Terminal() {
  return (
    <span className="flex size-9 rounded-[7px] bg-linear-to-b from-[#ee3fa7] to-[#f3a63f] p-[2px]">
      <svg viewBox="0 0 32 32" className="size-8 rounded-[5px] bg-black">
        <path d="M8 6L4 11H7L5 15L10 10H7L9 6Z" fill="#fff" stroke="#fff" />
        <path d="M12 14H18" stroke="#ccc" strokeWidth="1.500" />
      </svg>
    </span>
  );
}

function Monitor() {
  return (
    <svg viewBox="0 0 36 36" className={svg36}>
      <circle cx="18" cy="18" r="17" fill="#5a60c8" />
      <circle cx="18" cy="18" r="13" fill="#3f458f" stroke="#7c84f0" strokeWidth="1.500" />
      <path d="M18 5A13 13 0 0 0 18 31Q23 31 26 28" fill="none" stroke="#e6e8ff" strokeWidth="1.500" />
      <path d="M8 21Q11 24 13 18Q15 11 17 16L19 21Q20 23 22 19Q24 16 25 22L28 22" fill="none" stroke="#fff" strokeWidth="1.400" />
    </svg>
  );
}

function Toggle() {
  return (
    <svg viewBox="0 0 36 36" className={svg36}>
      <circle cx="18" cy="18" r="17" fill="#559fe9" />
      <circle cx="18" cy="18" r="14" fill="#3f75b8" />
      <rect x="9" y="15" width="16" height="6" rx="3" fill="#89a9d1" />
      <circle cx="23" cy="18" r="5" fill="#fff" />
    </svg>
  );
}

function Folder() {
  return (
    <svg viewBox="0 0 38 36" className="h-9 w-[38px] overflow-visible">
      <path d="M4 6Q4 4 6 4H14L17 6H33Q36 6 36 9V15H4Z" fill="#386ba8" />
      <path d="M5 7H18L20 8H34V12H5Z" fill="#fff" />
      <path d="M0 12Q0 10 2 10H20L23 8H36Q38 8 38 10V31Q38 33 36 33H2Q0 33 0 31Z" fill="#4f93e1" />
      <path d="M29 33L38 24V31Q38 33 36 33Z" fill="#4484cf" />
      <path d="M13 23L19 17L25 23M15 22V28H18V24H21V28H23V22" fill="none" stroke="#356eaf" strokeWidth="1.200" />
    </svg>
  );
}

function Bag() {
  return (
    <svg viewBox="0 0 30 33" className="h-[33px] w-[30px]">
      <rect width="30" height="33" rx="1" fill="#3f7cff" />
      <path d="M30 20Q22 30 5 29L0 33H30Z" fill="#4a92ff" />
      <path d="M8 6Q10 13 15 13Q20 13 22 6" fill="none" stroke="#fff" strokeWidth="2.200" />
    </svg>
  );
}

function Obs() {
  return (
    <svg viewBox="0 0 36 36" className={svg36}>
      <circle cx="18" cy="18" r="17" fill="#323234" />
      <g fill="none" stroke="#e3e3e3" strokeWidth="1.800" strokeLinecap="round">
        <path d="M18 18Q10 15 13 7M18 18Q24 12 29 19Q29 22 27 25M18 18Q19 28 10 27" />
      </g>
      <circle cx="18" cy="18" r="1.800" fill="#e3e3e3" />
    </svg>
  );
}

function Gimp() {
  return (
    <svg viewBox="0 0 36 36" className={svg36}>
      <path d="M2 3Q4 9 9 8H27Q32 9 34 3Q36 17 29 27Q24 34 18 34Q12 34 7 27Q0 17 2 3Z" fill="#5a4b3c" />
      <path d="M22 33L24 29L30 8Q33 7 34 3Q36 17 29 27Q26 31 22 33Z" fill="#493c31" />
      <circle cx="10.500" cy="18" r="4" fill="#eee" />
      <circle cx="25" cy="18" r="4" fill="#eee" />
      <circle cx="11.500" cy="18" r="2" fill="#111" />
      <circle cx="25" cy="18" r="2" fill="#111" />
      <path d="M14 30Q18 27 22 30Q20 34 18 34Q16 34 14 30Z" fill="#252525" />
    </svg>
  );
}

function Discord() {
  return (
    <span className="flex h-[33px] w-8 items-center justify-center rounded-[2px] bg-linear-to-br from-[#8b82e4] from-78% to-[#6b62b8] to-78%">
      <FaDiscord className="size-[22px] text-white" />
    </span>
  );
}

function Tweaks() {
  return (
    <svg viewBox="0 0 36 36" className={svg36}>
      <rect x="0" y="2" width="36" height="33" rx="2" fill="#dedede" />
      <path d="M0 31H36V33Q36 35 34 35H2Q0 35 0 33Z" fill="#a8a8a8" />
      <rect x="3" y="11.500" width="30" height="4.500" rx="2" fill="#aaa" stroke="#777" strokeWidth=".7" />
      <path d="M12 4H24L26 7V19L24 21H12L10 19V7Z" fill="#5c5c5c" />
      <rect x="13" y="6" width="10" height="11" fill="#333" />
      <path d="M18 7V16" stroke="#e32626" strokeWidth="2.500" />
      <path d="M7 24V29M10 24V27M13 24V27M16 24V27M19 24V29M22 24V27M25 24V27M28 24V27M30 24V29" stroke="#888" />
    </svg>
  );
}

function Github() {
  return (
    <span className="flex size-[34px] items-center justify-center rounded-full bg-[#efefef]">
      <FaGithub className="size-[23px] text-[#2d2d2d]" />
    </span>
  );
}

function Code() {
  return (
    <svg viewBox="0 0 36 36" className={svg36}>
      <path d="M26 1L1 24L5 28L28 11Z" fill="#0f76b8" />
      <path d="M5 9L1 12L26 35L28 26Z" fill="#1689d1" />
      <path d="M26 1L35 5V31L26 35V1Z" fill="#2aa7ef" />
      <path d="M24 2L26 1V35L24 33Z" fill="#2398e0" />
    </svg>
  );
}

function Unknown() {
  return (
    <span className="flex h-[35px] w-[30px] items-center justify-center rounded-[2px] bg-[#f2f2f2] text-[32px] leading-none font-light text-[#8a8a8a]">
      ?
    </span>
  );
}

function Brave() {
  return (
    <span className="flex size-[34px] items-center justify-center rounded-full bg-[#ffc72e]">
      <BraveMark className="h-[26px] w-[24px]" color="#fb4a2c" />
    </span>
  );
}

const dock: { Icon: () => React.ReactElement; mark: "none" | "one" | "two" | "bar" }[] = [
  { Icon: Chrome, mark: "two" },
  { Icon: Firefox, mark: "none" },
  { Icon: Terminal, mark: "one" },
  { Icon: Monitor, mark: "none" },
  { Icon: Toggle, mark: "none" },
  { Icon: Folder, mark: "none" },
  { Icon: Bag, mark: "none" },
  { Icon: Obs, mark: "none" },
  { Icon: Gimp, mark: "none" },
  { Icon: Discord, mark: "none" },
  { Icon: Tweaks, mark: "none" },
  { Icon: Github, mark: "one" },
  { Icon: Bag, mark: "none" },
  { Icon: Code, mark: "two" },
  { Icon: Unknown, mark: "none" },
  { Icon: Brave, mark: "bar" },
  { Icon: Toggle, mark: "none" },
  { Icon: Monitor, mark: "one" },
];

function Dock() {
  return (
    <div className="flex flex-1 flex-col">
      <div className="ml-[471px] flex h-[87px] items-end pb-[5px]">
        {dock.map(({ Icon }, i) => (
          <div key={i} className="flex h-9 w-[46px] shrink-0 items-center justify-center">
            <Icon />
          </div>
        ))}
      </div>
      <div className="ml-[465px] h-[5px] w-[838px] rounded-t-[10px] bg-[#2a2b33] pl-[5px]">
        <div className="flex h-[5px] items-center">
          {dock.map(({ mark }, i) => (
            <div key={i} className="flex w-[46px] shrink-0 items-center justify-center gap-[2px]">
              {mark === "bar" && <span className="h-[3px] w-[46px] rounded-full bg-[#5654f5]" />}
              {(mark === "one" || mark === "two") && <span className="size-[3px] rounded-full bg-[#5a59f5]" />}
              {mark === "two" && <span className="size-[3px] rounded-full bg-[#5a59f5]" />}
            </div>
          ))}
        </div>
      </div>
    </div>
  );
}

export default function App() {
  return (
    <div className={`flex h-[1035px] w-[1768px] flex-col overflow-hidden bg-[#0d1018] ${ui}`}>
      <div className="mr-px ml-[3px] flex h-[943px] shrink-0 flex-col rounded-b-[3px] border-x-[3px] border-b-[5px] border-x-[#3d3d3d] border-b-[#202122] bg-[#303038]">
        <TitleBar />
        <TabStrip />
        <NavBar />
        <BookmarksBar />
        <Page />
      </div>
      <div className="flex flex-1 flex-col bg-linear-to-b from-[#090a0e] via-[#12141d] via-40% to-[#171924]">
        <Dock />
      </div>
    </div>
  );
}
